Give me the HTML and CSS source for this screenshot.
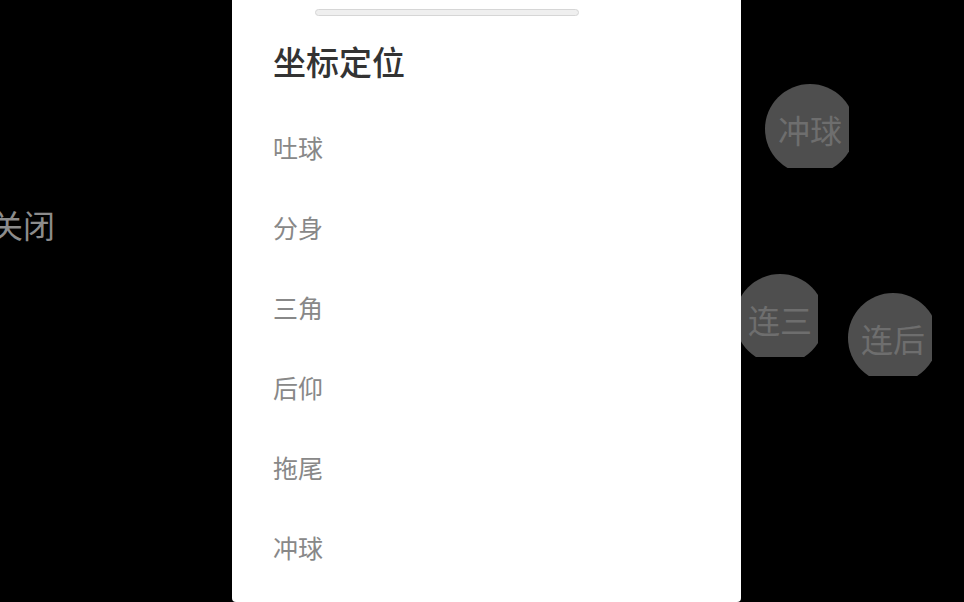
FILE: index.html
```html
<!DOCTYPE html>
<html lang="zh">
<head>
<meta charset="utf-8">
<title>坐标定位</title>
<link rel="stylesheet" href="styles.css">
</head>
<body>
<div class="canvas">
  <div class="close-label">关闭</div>
  <div class="btn-clip clip-chongqiu"><div class="btn">冲球</div></div>
  <div class="btn-clip clip-liansan"><div class="btn">连三</div></div>
  <div class="btn-clip clip-lianhou"><div class="btn">连后</div></div>
  <div class="sheet">
    <div class="handle"></div>
    <h1 class="title">坐标定位</h1>
    <ul class="list">
      <li class="item">吐球</li>
      <li class="item">分身</li>
      <li class="item">三角</li>
      <li class="item">后仰</li>
      <li class="item">拖尾</li>
      <li class="item">冲球</li>
    </ul>
  </div>
</div>
</body>
</html>
```
FILE: styles.css
```css
html, body {
  margin: 0;
  padding: 0;
  background: #000;
  width: 964px;
  height: 602px;
  overflow: hidden;
  font-family: "Noto Sans CJK SC", "Noto Sans", sans-serif;
}
.canvas {
  position: relative;
  width: 964px;
  height: 602px;
  overflow: hidden;
}
.close-label {
  position: absolute;
  left: -9px;
  top: 204px;
  font-size: 32px;
  line-height: 40px;
  color: #8c8c8c;
}
.btn-clip {
  position: absolute;
  overflow: hidden;
}
.btn {
  width: 90px;
  height: 90px;
  border-radius: 50%;
  background: #4e4e4e;
  color: #6e6e6e;
  font-size: 32px;
  display: flex;
  align-items: center;
  justify-content: center;
  line-height: 1;
}
.clip-chongqiu { left: 765px; top: 84px; width: 84px; height: 84px; }
.clip-liansan { left: 735px; top: 274px; width: 83px; height: 83px; }
.clip-lianhou { left: 848px; top: 293px; width: 84px; height: 83px; }
.sheet {
  position: absolute;
  left: 232px;
  top: 0;
  width: 509px;
  height: 602px;
  background: #fff;
  border-radius: 0 0 4px 4px;
  display: flex;
  flex-direction: column;
}
.handle {
  margin: 9px 0 0 83px;
  width: 262px;
  height: 5px;
  border: 1px solid #d6d6d6;
  background: #efefef;
  border-radius: 4px;
}
.title {
  margin: 25px 0 0 41px;
  font-size: 33px;
  line-height: 40px;
  font-weight: 500;
  color: #333;
}
.list {
  list-style: none;
  margin: 26px 0 0 0;
  padding: 0 0 0 41px;
}
.item {
  height: 80px;
  line-height: 80px;
  font-size: 25px;
  color: #888;
}
```
